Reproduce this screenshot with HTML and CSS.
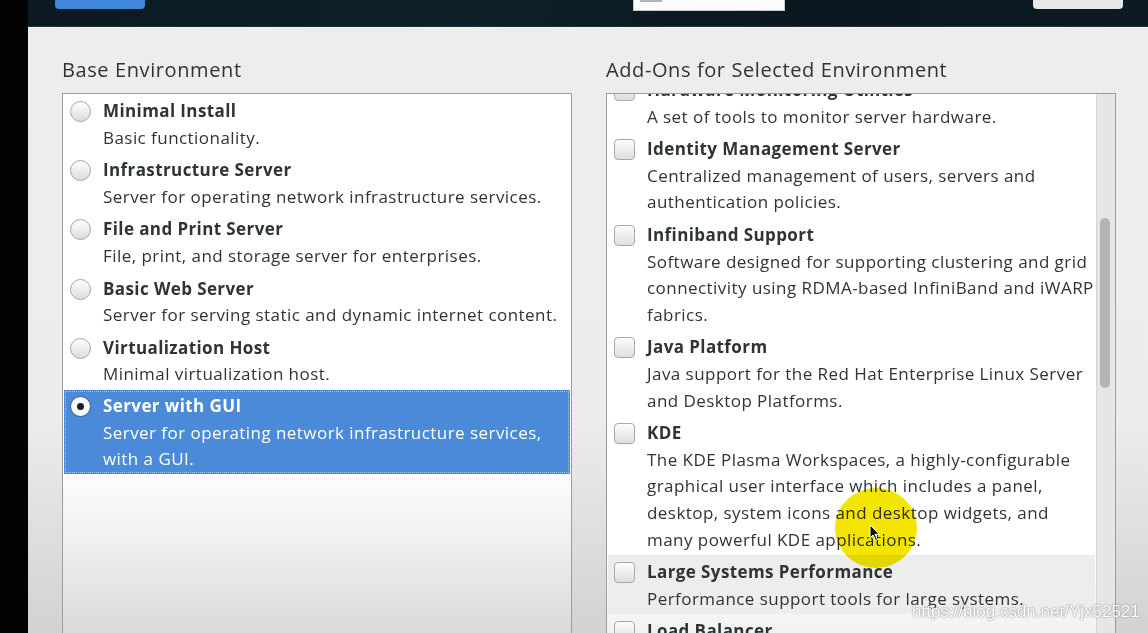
FILE: index.html
```html
<!DOCTYPE html>
<html>
    <head>
        <title>Software Selection</title>
        <link rel="stylesheet" href="styles.css">
    </head>
    <body>
        <div class="screen">
            <div class="edge"></div>
            <div class="installer">
                <!--top bar, mostly scrolled off-->
                <div class="topbar">
                    <div class="done-btn"></div>
                    <div class="kbd-box"><span class="kbd-txt"></span></div>
                    <div class="help-btn"></div>
                </div>

                <div class="content">
                    <!--BASE ENVIRONMENT-->
                    <div class="column">
                        <h2 class="col-title">Base Environment</h2>
                        <div class="panel panel-left">
                            <div class="item">
                                <span class="radio"></span>
                                <div class="item-text">
                                    <div class="item-name">Minimal Install</div>
                                    <div class="item-desc">Basic functionality.</div>
                                </div>
                            </div>
                            <div class="item">
                                <span class="radio"></span>
                                <div class="item-text">
                                    <div class="item-name">Infrastructure Server</div>
                                    <div class="item-desc">Server for operating network infrastructure services.</div>
                                </div>
                            </div>
                            <div class="item">
                                <span class="radio"></span>
                                <div class="item-text">
                                    <div class="item-name">File and Print Server</div>
                                    <div class="item-desc">File, print, and storage server for enterprises.</div>
                                </div>
                            </div>
                            <div class="item">
                                <span class="radio"></span>
                                <div class="item-text">
                                    <div class="item-name">Basic Web Server</div>
                                    <div class="item-desc">Server for serving static and dynamic internet content.</div>
                                </div>
                            </div>
                            <div class="item">
                                <span class="radio"></span>
                                <div class="item-text">
                                    <div class="item-name">Virtualization Host</div>
                                    <div class="item-desc">Minimal virtualization host.</div>
                                </div>
                            </div>
                            <div class="item selected">
                                <span class="radio checked"></span>
                                <div class="item-text">
                                    <div class="item-name">Server with GUI</div>
                                    <div class="item-desc">Server for operating network infrastructure services,<br>with a GUI.</div>
                                </div>
                            </div>
                        </div>
                    </div>

                    <!--ADD-ONS-->
                    <div class="column">
                        <h2 class="col-title">Add-Ons for Selected Environment</h2>
                        <div class="panel panel-right">
                            <div class="addon-list">
                                <div class="item">
                                    <span class="check"></span>
                                    <div class="item-text">
                                        <div class="item-name">Hardware Monitoring Utilities</div>
                                        <div class="item-desc">A set of tools to monitor server hardware.</div>
                                    </div>
                                </div>
                                <div class="item">
                                    <span class="check"></span>
                                    <div class="item-text">
                                        <div class="item-name">Identity Management Server</div>
                                        <div class="item-desc">Centralized management of users, servers and<br>authentication policies.</div>
                                    </div>
                                </div>
                                <div class="item">
                                    <span class="check"></span>
                                    <div class="item-text">
                                        <div class="item-name">Infiniband Support</div>
                                        <div class="item-desc">Software designed for supporting clustering and grid<br>connectivity using RDMA-based InfiniBand and iWARP<br>fabrics.</div>
                                    </div>
                                </div>
                                <div class="item">
                                    <span class="check"></span>
                                    <div class="item-text">
                                        <div class="item-name">Java Platform</div>
                                        <div class="item-desc">Java support for the Red Hat Enterprise Linux Server<br>and Desktop Platforms.</div>
                                    </div>
                                </div>
                                <div class="item">
                                    <span class="check"></span>
                                    <div class="item-text">
                                        <div class="item-name">KDE</div>
                                        <div class="item-desc">The KDE Plasma Workspaces, a highly-configurable<br>graphical user interface which includes a panel,<br>desktop, system icons and desktop widgets, and<br>many powerful KDE applications.</div>
                                    </div>
                                </div>
                                <div class="item hover">
                                    <span class="check"></span>
                                    <div class="item-text">
                                        <div class="item-name">Large Systems Performance</div>
                                        <div class="item-desc">Performance support tools for large systems.</div>
                                    </div>
                                </div>
                                <div class="item">
                                    <span class="check"></span>
                                    <div class="item-text">
                                        <div class="item-name">Load Balancer</div>
                                        <div class="item-desc">Load balancing support for network traffic.</div>
                                    </div>
                                </div>
                            </div>
                            <div class="scrollbar"><div class="thumb"></div></div>
                        </div>
                    </div>
                </div>
            </div>
        </div>

        <!--screen recorder overlays-->
        <div class="click-spot"></div>
        <svg class="cursor" width="12" height="18" viewBox="0 0 12 18">
            <path d="M1 1 L1 14 L4 11 L6.5 16.5 L8.5 15.6 L6 10.3 L10.5 10.3 Z" fill="#111" stroke="#fff" stroke-width="1"/>
        </svg>
        <div class="watermark">https://blog.csdn.net/Yjx52521</div>
    </body>
</html>
```

FILE: styles.css
```css
body{
    margin: 0;
    background-color: black;
    font-family: "Open Sans", "DejaVu Sans", sans-serif;
    color: #2e3436;
    overflow: hidden;
}

.screen{
    display: flex;
    height: 633px;
}

.edge{
    width: 28px;
    background-color: #020303;
}

.installer{
    flex: 1;
    display: flex;
    flex-direction: column;
}

.topbar{
    height: 26px;
    background: linear-gradient(100deg, #0b1a22 0%, #0d1f28 40%, #0a171e 70%, #0c1b23 100%);
    border-bottom: 1px solid #2a3236;
    position: relative;
}

.done-btn{
    position: absolute;
    left: 27px;
    top: -10px;
    width: 90px;
    height: 19px;
    background-color: #3f87da;
    border-radius: 4px;
}

.kbd-box{
    position: absolute;
    left: 605px;
    top: -10px;
    width: 150px;
    height: 19px;
    background-color: #fcfcfc;
    border: 1px solid #c8c8c8;
}

.kbd-txt{
    position: absolute;
    left: 6px;
    top: 9px;
    width: 22px;
    height: 2px;
    background-color: #b5b5b5;
}

.help-btn{
    position: absolute;
    left: 1005px;
    top: -10px;
    width: 90px;
    height: 19px;
    background-color: #e7e7e7;
    border-radius: 4px;
}

.content{
    flex: 1;
    display: flex;
    gap: 34px;
    padding: 0 32px 0 34px;
    background: linear-gradient(#ededed 0%, #ececec 65%, #d2d2d2 100%);
    min-height: 0;
}

.column{
    width: 510px;
    display: flex;
    flex-direction: column;
}

.col-title{
    margin: 29px 0 0 0;
    height: 37px;
    font-size: 20px;
    font-weight: normal;
    line-height: 28px;
    letter-spacing: 0.6px;
}

.panel{
    flex: 1;
    border: 1px solid #9c9c9c;
    border-bottom: none;
    overflow: hidden;
    position: relative;
    min-height: 0;
}

.panel-left{
    background: linear-gradient(#ffffff 0%, #ffffff 68%, #f3f3f3 80%, #dadada 100%);
}

.panel-right{
    background: linear-gradient(#ffffff 0%, #ffffff 85%, #f2f2f2 100%);
    display: flex;
}

.addon-list{
    flex: 1;
    margin-top: -21px;
}

.item{
    display: flex;
    padding: 4px 0 2px 6px;
    margin: 0 1px;
}

.item-text{
    margin-left: 12px;
}

.item-name{
    font-size: 17px;
    font-weight: bold;
    line-height: 26.6px;
    letter-spacing: 0.4px;
}

.item-desc{
    font-size: 17px;
    line-height: 26.6px;
    letter-spacing: 0.45px;
}

.item.selected{
    background-color: #4a8ad8;
    color: white;
    outline: 1px dotted #9fc2ec;
    outline-offset: -2px;
    padding-top: 3px;
    padding-bottom: 1px;
}

.item.hover{
    background-color: #ededed;
}

.radio{
    flex: none;
    width: 19px;
    height: 19px;
    margin-top: 3px;
    border: 1px solid #a4a4a4;
    border-radius: 50%;
    background: linear-gradient(#ffffff, #dcdcdc);
    position: relative;
}

.radio.checked{
    border-color: #2d5d94;
    background: #fafafa;
}

.radio.checked::after{
    content: "";
    position: absolute;
    left: 6px;
    top: 6px;
    width: 7px;
    height: 7px;
    border-radius: 50%;
    background-color: #1e1e1e;
}

.check{
    flex: none;
    width: 19px;
    height: 19px;
    margin-top: 3px;
    border: 1px solid #a8a8a8;
    border-radius: 4px;
    background: linear-gradient(#fdfdfd, #dedede);
}

.scrollbar{
    width: 18px;
    flex: none;
    background-color: #e6e6e6;
    border-left: 1px solid #d6d6d6;
    position: relative;
}

.thumb{
    position: absolute;
    left: 3px;
    top: 124px;
    width: 10px;
    height: 170px;
    border-radius: 5px;
    background-color: #b4b4b4;
}

.click-spot{
    position: absolute;
    left: 835px;
    top: 488px;
    width: 82px;
    height: 80px;
    border-radius: 50%;
    background-color: #f4e500;
    mix-blend-mode: multiply;
}

.cursor{
    position: absolute;
    left: 869px;
    top: 524px;
}

.watermark{
    position: absolute;
    left: 912px;
    top: 602px;
    font-family: "Liberation Sans", Arial, sans-serif;
    font-size: 17px;
    color: #ffffff;
    text-shadow: 0 0 2px #8a8a8a, 0 0 1px #9a9a9a;
}
```
